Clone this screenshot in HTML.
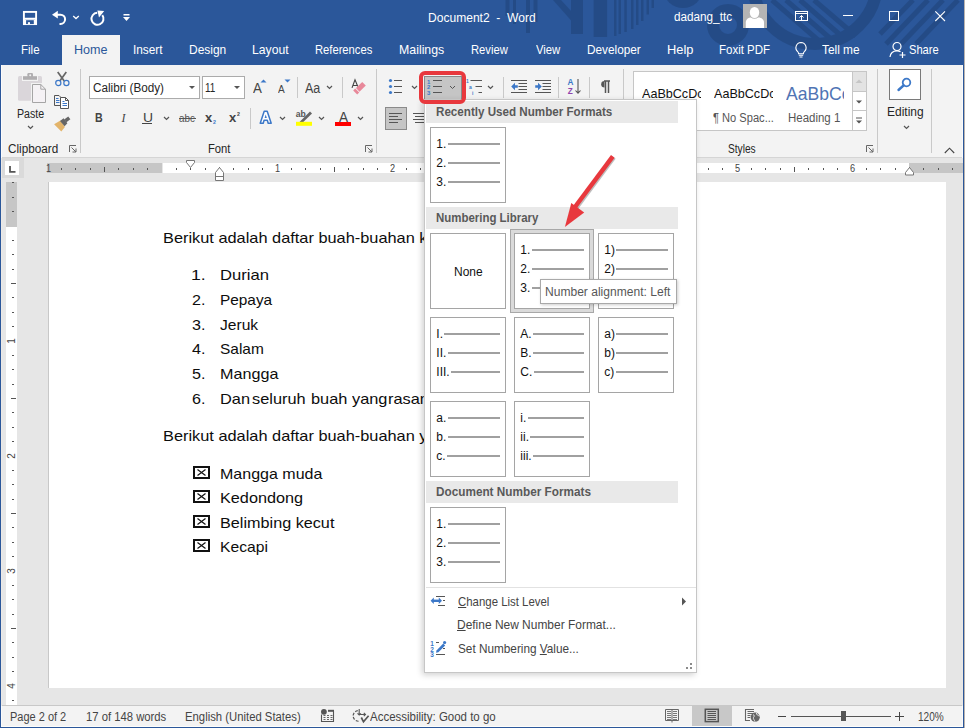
<!DOCTYPE html>
<html><head><meta charset="utf-8"><title>Word</title>
<style>
html,body{margin:0;padding:0;width:965px;height:728px;overflow:hidden;background:#F3F3F3}
body{position:relative;font-family:"Liberation Sans",sans-serif}
.t{position:absolute;white-space:pre;transform-origin:0 0;display:inline-block}
svg{overflow:visible}
</style></head><body>
<div style="position:absolute;left:0px;top:0px;width:965px;height:65px;background:#2B579A"></div>
<svg style="position:absolute;left:0px;top:0px;" width="965" height="65" viewBox="0 0 965 65"><defs><clipPath id="tb"><rect x="0" y="0" width="965" height="52"/></clipPath></defs>
<g clip-path="url(#tb)" fill="#0A1E3C" opacity="0.2">
<rect x="505.5" y="0" width="4" height="16"/><rect x="513" y="0" width="3" height="24"/>
<rect x="526" y="0" width="4" height="33"/><rect x="533.5" y="0" width="4" height="22"/>
<polygon points="553,0 561,0 583,24 583,34"/><rect x="571" y="0" width="12" height="34"/>
<rect x="593.6" y="0" width="13.5" height="37"/>
<rect x="614" y="0" width="2.5" height="36"/><rect x="618.5" y="0" width="2.5" height="34"/><rect x="624.3" y="0" width="2.5" height="32"/>
<rect x="631" y="0" width="2.5" height="29"/><rect x="636" y="0" width="2.5" height="25"/><rect x="641" y="0" width="2.5" height="21"/>
<rect x="646.5" y="0" width="2.5" height="14.5"/><rect x="651.5" y="0" width="2.5" height="8"/>
<circle cx="683" cy="-12" r="20"/>
</g>
<g clip-path="url(#tb)" fill="none" stroke="#0A1E3C" opacity="0.2">
<circle cx="728" cy="25" r="15" stroke-width="12"/>
<circle cx="815" cy="-18" r="62" stroke-width="12"/>
<path d="M772 0 L818 40 M786 0 L832 40 M800 0 L846 40 M814 0 L856 36" stroke-width="5"/>
<path d="M958 0 L916 44 M943 0 L901 44 M928 0 L886 44 M913 0 L880 34" stroke-width="5"/>
</g></svg>
<div style="position:absolute;left:62px;top:35px;width:58px;height:30px;background:#F3F3F3"></div>
<div style="position:absolute;left:0px;top:65px;width:965px;height:92px;background:#F3F3F3"></div>
<div style="position:absolute;left:0px;top:157px;width:965px;height:1px;background:#D5D5D5"></div>
<div style="position:absolute;left:0px;top:158px;width:965px;height:547px;background:#E6E6E6"></div>
<div style="position:absolute;left:0px;top:705px;width:965px;height:1px;background:#C8C8C8"></div>
<div style="position:absolute;left:0px;top:706px;width:965px;height:22px;background:#F3F3F3"></div>
<div style="position:absolute;left:1px;top:65px;width:1px;height:93px;background:#FBFBFB"></div>
<div style="position:absolute;left:962px;top:65px;width:1px;height:93px;background:#FBFBFB"></div>
<div style="position:absolute;left:1px;top:158px;width:1px;height:548px;background:#ECE9E6"></div>
<div style="position:absolute;left:962px;top:158px;width:1px;height:548px;background:#ECE9E6"></div>
<div style="position:absolute;left:1px;top:706px;width:1px;height:21px;background:#FBFBFB"></div>
<div style="position:absolute;left:962px;top:706px;width:1px;height:21px;background:#FBFBFB"></div>
<div style="position:absolute;left:1px;top:726px;width:962px;height:1px;background:#FDFDFB"></div>
<div style="position:absolute;left:0px;top:0px;width:1px;height:728px;background:#2B579A"></div>
<div style="position:absolute;left:963px;top:0px;width:1px;height:728px;background:#2B579A"></div>
<div style="position:absolute;left:964px;top:0px;width:1px;height:728px;background:#B9B3AE"></div>
<div style="position:absolute;left:0px;top:727px;width:964px;height:1px;background:#2B579A"></div>
<svg style="position:absolute;left:22px;top:10px;" width="16" height="16" viewBox="0 0 16 16"><rect x="1.9" y="1.9" width="12.2" height="12.2" fill="none" stroke="#fff" stroke-width="1.9"/><path d="M2 8.7 H14" stroke="#fff" stroke-width="1.9"/><path d="M2 9.5 H14 V14.5 H2 Z" fill="#fff"/><rect x="4.1" y="10.2" width="7.7" height="3.9" fill="#2B579A"/><rect x="5.9" y="12.2" width="2.1" height="2" fill="#fff"/></svg>
<svg style="position:absolute;left:50px;top:9px;" width="18" height="17" viewBox="0 0 18 17"><path d="M2 5.7 L7.8 1.8 V9.6 Z" fill="#fff"/><path d="M6 5.7 H10.5 A4.6 4.6 0 0 1 10.5 14.9 H9.5" fill="none" stroke="#fff" stroke-width="2"/></svg>
<svg style="position:absolute;left:72px;top:15px;" width="8" height="5" viewBox="0 0 8 5"><path d="M1.2 1 L4 3.6 L6.8 1" fill="none" stroke="#fff" stroke-width="1.3"/></svg>
<svg style="position:absolute;left:90px;top:10px;" width="16" height="16" viewBox="0 0 16 16"><path d="M12.3 5.2 A6 6 0 1 1 7.2 2.8" fill="none" stroke="#fff" stroke-width="2"/><path d="M7.4 0.6 L14.2 1 L9 7.4 Z" fill="#fff"/></svg>
<svg style="position:absolute;left:122px;top:13px;" width="9" height="9" viewBox="0 0 9 9"><rect x="1.5" y="1" width="6" height="1.5" fill="#fff"/><path d="M1 4 H8 L4.5 8 Z" fill="#fff"/></svg>
<span class="t" id="t50826fd906" style="left:427.50px;top:11.64px;font-size:12px;line-height:12px;color:#FFFFFF;font-weight:400;font-family:'Liberation Sans',sans-serif;transform:scaleX(1.0049);">Document2&nbsp;&nbsp;-&nbsp;&nbsp;Word</span>
<span class="t" id="t759e692181" style="left:673.70px;top:10.84px;font-size:12px;line-height:12px;color:#FFFFFF;font-weight:400;font-family:'Liberation Sans',sans-serif;transform:scaleX(0.9767);">dadang_ttc</span>
<div style="position:absolute;left:743px;top:4px;width:24px;height:24px;background:#B4B4B4"></div>
<svg style="position:absolute;left:743px;top:4px;" width="24" height="24" viewBox="0 0 24 24"><path d="M2.8 24 V18.5 C2.8 15.5 5 13.4 8 13.4 H15.5 C18.5 13.4 21 15.5 21 18.5 V24 Z" fill="#fff"/><ellipse cx="11.5" cy="8.5" rx="5.5" ry="6.3" fill="#B4B4B4"/><ellipse cx="11.5" cy="8.5" rx="4.7" ry="5.5" fill="#fff"/></svg>
<svg style="position:absolute;left:795px;top:11px;" width="14" height="11" viewBox="0 0 14 11"><rect x="0.5" y="0.5" width="12" height="9" fill="none" stroke="#fff" stroke-width="1"/><path d="M0.5 2.5 H12.5" stroke="#fff" stroke-width="1"/><path d="M6.5 9 V4.5 M4.5 6.5 L6.5 4.5 L8.5 6.5" fill="none" stroke="#fff" stroke-width="1"/></svg>
<div style="position:absolute;left:843px;top:15px;width:10px;height:1px;background:#fff"></div>
<svg style="position:absolute;left:889px;top:11px;" width="11" height="11" viewBox="0 0 11 11"><rect x="0.5" y="0.5" width="9" height="9" fill="none" stroke="#fff" stroke-width="1"/></svg>
<svg style="position:absolute;left:935px;top:11px;" width="11" height="11" viewBox="0 0 11 11"><path d="M0.3 0.3 L10 10 M10 0.3 L0.3 10" stroke="#fff" stroke-width="1.1"/></svg>
<span class="t" id="t38dda35d39" style="left:20.61px;top:43.09px;font-size:13px;line-height:13px;color:#FFFFFF;font-weight:400;font-family:'Liberation Sans',sans-serif;transform:scaleX(0.8875);">File</span>
<span class="t" id="t00ed5b1c03" style="left:73.53px;top:43.09px;font-size:13px;line-height:13px;color:#2B579A;font-weight:400;font-family:'Liberation Sans',sans-serif;transform:scaleX(0.9657);">Home</span>
<span class="t" id="t0c2e46f12b" style="left:132.89px;top:43.09px;font-size:13px;line-height:13px;color:#FFFFFF;font-weight:400;font-family:'Liberation Sans',sans-serif;transform:scaleX(0.9091);">Insert</span>
<span class="t" id="tb33252f86d" style="left:188.78px;top:43.09px;font-size:13px;line-height:13px;color:#FFFFFF;font-weight:400;font-family:'Liberation Sans',sans-serif;transform:scaleX(0.9201);">Design</span>
<span class="t" id="t018b2ecd3f" style="left:251.76px;top:43.09px;font-size:13px;line-height:13px;color:#FFFFFF;font-weight:400;font-family:'Liberation Sans',sans-serif;transform:scaleX(0.9396);">Layout</span>
<span class="t" id="taaff4938c7" style="left:315.34px;top:43.09px;font-size:13px;line-height:13px;color:#FFFFFF;font-weight:400;font-family:'Liberation Sans',sans-serif;transform:scaleX(0.8609);">References</span>
<span class="t" id="t418e57d4e2" style="left:398.95px;top:43.09px;font-size:13px;line-height:13px;color:#FFFFFF;font-weight:400;font-family:'Liberation Sans',sans-serif;transform:scaleX(0.9495);">Mailings</span>
<span class="t" id="t5a5f72c3c6" style="left:471.44px;top:43.09px;font-size:13px;line-height:13px;color:#FFFFFF;font-weight:400;font-family:'Liberation Sans',sans-serif;transform:scaleX(0.8642);">Review</span>
<span class="t" id="t5b546ff0f5" style="left:536.20px;top:43.09px;font-size:13px;line-height:13px;color:#FFFFFF;font-weight:400;font-family:'Liberation Sans',sans-serif;transform:scaleX(0.8685);">View</span>
<span class="t" id="t26e85c247d" style="left:587.09px;top:43.09px;font-size:13px;line-height:13px;color:#FFFFFF;font-weight:400;font-family:'Liberation Sans',sans-serif;transform:scaleX(0.9079);">Developer</span>
<span class="t" id="tcad589be5b" style="left:666.71px;top:43.09px;font-size:13px;line-height:13px;color:#FFFFFF;font-weight:400;font-family:'Liberation Sans',sans-serif;transform:scaleX(0.9880);">Help</span>
<span class="t" id="ta532031cd1" style="left:718.82px;top:43.09px;font-size:13px;line-height:13px;color:#FFFFFF;font-weight:400;font-family:'Liberation Sans',sans-serif;transform:scaleX(0.8849);">Foxit PDF</span>
<span class="t" id="t941b6eb1b3" style="left:822.00px;top:43.09px;font-size:13px;line-height:13px;color:#FFFFFF;font-weight:400;font-family:'Liberation Sans',sans-serif;transform:scaleX(0.9134);">Tell me</span>
<span class="t" id="t9260fbb219" style="left:909.20px;top:43.09px;font-size:13px;line-height:13px;color:#FFFFFF;font-weight:400;font-family:'Liberation Sans',sans-serif;transform:scaleX(0.8561);">Share</span>
<svg style="position:absolute;left:793px;top:41px;" width="16" height="17" viewBox="0 0 16 17"><path d="M8 1.5 A5.2 5.2 0 0 1 11.3 10.6 C10.5 11.3 10.4 12 10.4 12.8 H5.6 C5.6 12 5.5 11.3 4.7 10.6 A5.2 5.2 0 0 1 8 1.5 Z" fill="none" stroke="#fff" stroke-width="1.1"/><path d="M5.8 14.3 H10.2 M6.5 16 H9.5" stroke="#fff" stroke-width="1.1"/></svg>
<svg style="position:absolute;left:889px;top:41px;" width="18" height="17" viewBox="0 0 18 17"><circle cx="8" cy="5.5" r="4" fill="none" stroke="#fff" stroke-width="1.2"/><path d="M1 16 C1.5 11.5 4.5 9.8 8 9.8 C9.5 9.8 10.5 10.1 11.5 10.6" fill="none" stroke="#fff" stroke-width="1.2"/><path d="M13.5 11 V17 M10.5 14 H16.5" stroke="#fff" stroke-width="1.2"/></svg>
<svg style="position:absolute;left:17px;top:72px;" width="31" height="32" viewBox="0 0 31 32"><rect x="1" y="4" width="24" height="24.7" rx="1.5" fill="#DAD6DA"/>
<rect x="5" y="3" width="16" height="6" fill="#F3F3F3"/>
<rect x="6" y="4.2" width="14" height="3.6" fill="#B0AEB0"/>
<rect x="10.4" y="1" width="5.6" height="4.5" rx="1.2" fill="#B0AEB0"/><circle cx="13.2" cy="3.2" r="1" fill="#F3F3F3"/>
<rect x="14" y="11" width="16" height="21" fill="#F3F3F3"/>
<path d="M15.5 12.5 H23.8 L28.5 17.2 V30.5 H15.5 Z" fill="#F5F2F5" stroke="#A5A5A5" stroke-width="1"/>
<path d="M23.8 12.5 V17.2 H28.5" fill="none" stroke="#A5A5A5" stroke-width="1"/></svg>
<span class="t" id="tea2cef91c9" style="left:16.50px;top:107.54px;font-size:12px;line-height:12px;color:#262626;font-weight:400;font-family:'Liberation Sans',sans-serif;transform:scaleX(0.8868);">Paste</span>
<svg style="position:absolute;left:27px;top:125px;" width="7" height="5" viewBox="0 0 7 5"><path d="M1 1 L3.5 3.5 L6 1" fill="none" stroke="#555" stroke-width="1.2"/></svg>
<svg style="position:absolute;left:54px;top:71px;" width="16" height="16" viewBox="0 0 16 16"><path d="M3.7 1 L10.2 10 M12.3 1 L5.8 10" stroke="#666" stroke-width="1.7"/>
<circle cx="4.3" cy="12" r="2.6" fill="none" stroke="#3C78C8" stroke-width="1.2"/>
<circle cx="12.4" cy="12" r="2.6" fill="none" stroke="#3C78C8" stroke-width="1.2"/></svg>
<svg style="position:absolute;left:53px;top:94px;" width="18" height="16" viewBox="0 0 18 16"><path d="M1.5 1.5 H6 L8 3.5 V11.5 H1.5 Z" fill="#F3F3F3" stroke="#555" stroke-width="1"/>
<path d="M3 4.5 H5.5 M3 6.5 H6.5 M3 8.5 H6.5" stroke="#3C78C8" stroke-width="1"/>
<path d="M7.5 3.5 H12.5 L15.5 6.5 V14.5 H7.5 Z" fill="#fff" stroke="#555" stroke-width="1"/>
<path d="M12.5 3.5 V6.5 H15.5" fill="none" stroke="#555" stroke-width="1"/>
<path d="M9.5 7.5 H11.5 M9.5 9.5 H14 M9.5 11.5 H14" stroke="#3C78C8" stroke-width="1"/></svg>
<svg style="position:absolute;left:53px;top:116px;" width="18" height="17" viewBox="0 0 18 17"><path d="M1.1 8.2 L7.4 4.5 L11.9 10.9 L8.3 15.4 Z" fill="#E3B46A"/>
<path d="M7 5 L10.6 2.2 L14.4 7.2 L11.6 10.2 Z" fill="#666"/>
<path d="M11.2 3.4 L15.2 0.4 L17.4 3.2 L13.4 6.2 Z" fill="#666"/></svg>
<span class="t" id="t2fc24af427" style="left:7.50px;top:142.54px;font-size:12px;line-height:12px;color:#262626;font-weight:400;font-family:'Liberation Sans',sans-serif;transform:scaleX(0.9765);">Clipboard</span>
<svg style="position:absolute;left:69px;top:145px;" width="8" height="8" viewBox="0 0 8 8"><path d="M0.5 7 V0.5 H7" fill="none" stroke="#666" stroke-width="1"/><path d="M2.5 2.5 L7 7 M7 3.5 V7 H3.5" fill="none" stroke="#666" stroke-width="1"/></svg>
<div style="position:absolute;left:80px;top:69px;width:1px;height:84px;background:#C9C9C9"></div>
<div style="position:absolute;left:89px;top:76px;width:111px;height:23px;background:#fff;box-sizing:border-box;border:1px solid #ABABAB"></div>
<span class="t" id="t584eb017ee" style="left:92.70px;top:81.84px;font-size:12px;line-height:12px;color:#262626;font-weight:400;font-family:'Liberation Sans',sans-serif;transform:scaleX(0.9768);">Calibri (Body)</span>
<svg style="position:absolute;left:189px;top:86px;" width="7" height="4" viewBox="0 0 7 4"><path d="M0 0 H6 L3 3 Z" fill="#555"/></svg>
<div style="position:absolute;left:202px;top:76px;width:43px;height:23px;background:#fff;box-sizing:border-box;border:1px solid #ABABAB"></div>
<span class="t" id="t1cb0075a1e" style="left:205.40px;top:81.84px;font-size:12px;line-height:12px;color:#262626;font-weight:400;font-family:'Liberation Sans',sans-serif;transform:scaleX(0.8292);">11</span>
<svg style="position:absolute;left:234px;top:86px;" width="7" height="4" viewBox="0 0 7 4"><path d="M0 0 H6 L3 3 Z" fill="#555"/></svg>
<span class="t" id="t64e3f73cb9" style="left:253.00px;top:81.15px;font-size:14px;line-height:14px;color:#444;font-weight:400;font-family:'Liberation Sans',sans-serif;transform:scaleX(0.9500);">A</span>
<svg style="position:absolute;left:260px;top:79px;" width="7" height="4" viewBox="0 0 7 4"><path d="M0.5 3.5 L3.5 0.5 L6.5 3.5 Z" fill="#3C78C8"/></svg>
<span class="t" id="t7a5741da58" style="left:278.20px;top:83.69px;font-size:11px;line-height:11px;color:#444;font-weight:400;font-family:'Liberation Sans',sans-serif;transform:scaleX(0.9125);">A</span>
<svg style="position:absolute;left:284px;top:79px;" width="7" height="4" viewBox="0 0 7 4"><path d="M0.5 0.5 H6.5 L3.5 3.5 Z" fill="#3C78C8"/></svg>
<div style="position:absolute;left:297px;top:77px;width:1px;height:21px;background:#C9C9C9"></div>
<span class="t" id="t8c8012e9cd" style="left:305.00px;top:81.15px;font-size:14px;line-height:14px;color:#444;font-weight:400;font-family:'Liberation Sans',sans-serif;transform:scaleX(0.8940);">Aa</span>
<svg style="position:absolute;left:326px;top:85px;" width="7" height="5" viewBox="0 0 7 5"><path d="M1 1 L3.5 3.5 L6 1" fill="none" stroke="#555" stroke-width="1.2"/></svg>
<div style="position:absolute;left:342px;top:77px;width:1px;height:21px;background:#C9C9C9"></div>
<svg style="position:absolute;left:350px;top:78px;" width="18" height="18" viewBox="0 0 18 18"><path d="M2 9.9 L5 1.8 L7.8 8.5 M3 7.5 H7.5" fill="none" stroke="#444" stroke-width="1.1"/>
<path d="M12.2 3.9 L15.8 7.6 L9.5 13.8 L6 9.9 Z" fill="#E8889A"/>
<path d="M5.2 10.6 L9.2 14.6 L7.2 16.6 L3.2 12.6 Z" fill="#E8889A"/></svg>
<span class="t" id="t2efdc3fe56" style="left:95.30px;top:111.84px;font-size:12px;line-height:12px;color:#444;font-weight:700;font-family:'Liberation Sans',sans-serif;transform:scaleX(0.8889);">B</span>
<span class="t" id="t5e222f8c1f" style="left:121.50px;top:111.84px;font-size:12px;line-height:12px;color:#444;font-weight:400;font-family:'Liberation Serif',sans-serif;transform:scaleX(1.0000);font-style:italic">I</span>
<span class="t" id="t7e43fd0d65" style="left:142.50px;top:111.84px;font-size:12px;line-height:12px;color:#444;font-weight:400;font-family:'Liberation Sans',sans-serif;transform:scaleX(1.1625);">U</span>
<div style="position:absolute;left:142px;top:123px;width:10px;height:1px;background:#444"></div>
<svg style="position:absolute;left:163px;top:116px;" width="7" height="5" viewBox="0 0 7 5"><path d="M1 1 L3.5 3.5 L6 1" fill="none" stroke="#555" stroke-width="1.2"/></svg>
<span class="t" id="tc72ef3fb8f" style="left:179.00px;top:112.69px;font-size:11px;line-height:11px;color:#555;font-weight:400;font-family:'Liberation Sans',sans-serif;transform:scaleX(0.8939);">abc</span>
<div style="position:absolute;left:179px;top:118px;width:17px;height:1px;background:#555"></div>
<span class="t" id="t84927785d7" style="left:205.00px;top:110.99px;font-size:13px;line-height:13px;color:#444;font-weight:700;font-family:'Liberation Sans',sans-serif;transform:scaleX(1.0000);">x</span>
<span class="t" id="tee1b1b6b18" style="left:213.00px;top:118.92px;font-size:6px;line-height:6px;color:#3C78C8;font-weight:700;font-family:'Liberation Sans',sans-serif;transform:scaleX(0.8750);">2</span>
<span class="t" id="t7a4e1dc115" style="left:229.00px;top:110.99px;font-size:13px;line-height:13px;color:#444;font-weight:700;font-family:'Liberation Sans',sans-serif;transform:scaleX(1.0000);">x</span>
<span class="t" id="td243369668" style="left:237.00px;top:110.92px;font-size:6px;line-height:6px;color:#444;font-weight:700;font-family:'Liberation Sans',sans-serif;transform:scaleX(0.8750);">2</span>
<div style="position:absolute;left:250px;top:108px;width:1px;height:21px;background:#C9C9C9"></div>
<svg style="position:absolute;left:259px;top:110px;" width="14" height="15" viewBox="0 0 14 15"><path d="M1.2 13.2 L5.2 1.2 H8.2 L12.2 13.2 H9.2 L8.3 10.3 H5.1 L4.2 13.2 Z" fill="#fff" stroke="#3C78C8" stroke-width="1.5" stroke-linejoin="round"/><path d="M5.6 8 H7.8 L6.7 4.6 Z" fill="#3C78C8"/></svg>
<svg style="position:absolute;left:279px;top:116px;" width="7" height="5" viewBox="0 0 7 5"><path d="M1 1 L3.5 3.5 L6 1" fill="none" stroke="#555" stroke-width="1.2"/></svg>
<svg style="position:absolute;left:295px;top:109px;" width="18" height="18" viewBox="0 0 18 18"><text x="0.8" y="7.8" font-family="Liberation Sans" font-weight="700" font-size="8.6" fill="#555">ab</text>
<path d="M5 12.5 L15 2.6 L17 4.6 L7 14.3 L4.6 12.9 Z" fill="#666"/>
<rect x="1" y="12.8" width="16" height="4" fill="#FFFF00"/></svg>
<svg style="position:absolute;left:318px;top:116px;" width="7" height="5" viewBox="0 0 7 5"><path d="M1 1 L3.5 3.5 L6 1" fill="none" stroke="#555" stroke-width="1.2"/></svg>
<span class="t" id="t3f7b0a36ef" style="left:338.50px;top:110.15px;font-size:14px;line-height:14px;color:#444;font-weight:400;font-family:'Liberation Sans',sans-serif;transform:scaleX(0.9700);">A</span>
<div style="position:absolute;left:335px;top:122px;width:16px;height:4px;background:#FF0000"></div>
<svg style="position:absolute;left:357px;top:116px;" width="7" height="5" viewBox="0 0 7 5"><path d="M1 1 L3.5 3.5 L6 1" fill="none" stroke="#555" stroke-width="1.2"/></svg>
<span class="t" id="t2558f57348" style="left:208.40px;top:142.54px;font-size:12px;line-height:12px;color:#262626;font-weight:400;font-family:'Liberation Sans',sans-serif;transform:scaleX(0.9361);">Font</span>
<svg style="position:absolute;left:365px;top:145px;" width="8" height="8" viewBox="0 0 8 8"><path d="M0.5 7 V0.5 H7" fill="none" stroke="#666" stroke-width="1"/><path d="M2.5 2.5 L7 7 M7 3.5 V7 H3.5" fill="none" stroke="#666" stroke-width="1"/></svg>
<div style="position:absolute;left:376px;top:69px;width:1px;height:84px;background:#C9C9C9"></div>
<svg style="position:absolute;left:388px;top:78px;" width="16" height="17" viewBox="0 0 16 17"><circle cx="2.5" cy="2.5" r="1.6" fill="#3C78C8"/><circle cx="2.5" cy="8.5" r="1.6" fill="#3C78C8"/><circle cx="2.5" cy="14.5" r="1.6" fill="#3C78C8"/>
<path d="M6 2.5 H14 M6 8.5 H14 M6 14.5 H14" stroke="#555" stroke-width="1.1"/></svg>
<svg style="position:absolute;left:411px;top:85px;" width="7" height="5" viewBox="0 0 7 5"><path d="M1 1 L3.5 3.5 L6 1" fill="none" stroke="#555" stroke-width="1.2"/></svg>
<div style="position:absolute;left:423.5px;top:75.5px;width:38px;height:24px;background:#C5C5C5;box-sizing:border-box;border:1px solid #8A8A8A"></div>
<svg style="position:absolute;left:427px;top:78px;" width="16" height="17" viewBox="0 0 16 17"><text x="0" y="5.5" font-family="Liberation Sans" font-size="6" font-weight="700" fill="#3C78C8">1</text>
<text x="0" y="11" font-family="Liberation Sans" font-size="6" font-weight="700" fill="#3C78C8">2</text>
<text x="0" y="16.5" font-family="Liberation Sans" font-size="6" font-weight="700" fill="#3C78C8">3</text>
<path d="M6 2.5 H15 M6 8.5 H15 M6 14.5 H15" stroke="#555" stroke-width="1.1"/></svg>
<svg style="position:absolute;left:449px;top:85px;" width="7" height="5" viewBox="0 0 7 5"><path d="M1 1 L3.5 3.5 L6 1" fill="none" stroke="#555" stroke-width="1"/></svg>
<svg style="position:absolute;left:466px;top:78px;" width="17" height="17" viewBox="0 0 17 17"><text x="0" y="5" font-family="Liberation Sans" font-size="5" font-weight="700" fill="#3C78C8">1</text>
<text x="3" y="11" font-family="Liberation Sans" font-size="5" font-weight="700" fill="#3C78C8">a</text>
<text x="6" y="16.5" font-family="Liberation Sans" font-size="5" font-weight="700" fill="#3C78C8">i</text>
<path d="M4.5 2.5 H16 M9.5 8.5 H16 M12.5 14.5 H16" stroke="#555" stroke-width="1.1"/></svg>
<svg style="position:absolute;left:487px;top:85px;" width="7" height="5" viewBox="0 0 7 5"><path d="M1 1 L3.5 3.5 L6 1" fill="none" stroke="#555" stroke-width="1.2"/></svg>
<div style="position:absolute;left:503px;top:77px;width:1px;height:21px;background:#C9C9C9"></div>
<svg style="position:absolute;left:510px;top:79px;" width="18" height="15" viewBox="0 0 18 15"><path d="M1 1.5 H17 M8.5 4.5 H17 M8.5 7.5 H17 M8.5 10.5 H17 M1 13.5 H17" stroke="#555" stroke-width="1"/>
<path d="M1.2 7.5 L5 3.8 V6.2 H7.8 V8.8 H5 V11.2 Z" fill="#3C78C8"/></svg>
<svg style="position:absolute;left:534px;top:79px;" width="18" height="15" viewBox="0 0 18 15"><path d="M1 1.5 H17 M8.5 4.5 H17 M8.5 7.5 H17 M8.5 10.5 H17 M1 13.5 H17" stroke="#555" stroke-width="1"/>
<path d="M7.8 7.5 L4 3.8 V6.2 H1.2 V8.8 H4 V11.2 Z" fill="#3C78C8"/></svg>
<div style="position:absolute;left:558px;top:77px;width:1px;height:21px;background:#C9C9C9"></div>
<svg style="position:absolute;left:566px;top:78px;" width="17" height="17" viewBox="0 0 17 17"><text x="1.5" y="7.4" font-family="Liberation Sans" font-weight="700" font-size="8.2" fill="#3C78C8">A</text>
<text x="1.8" y="15.8" font-family="Liberation Sans" font-weight="700" font-size="8.2" fill="#8E44AD">Z</text>
<path d="M12 1 V15 M9.5 12.5 L12 15.2 L14.5 12.5" fill="none" stroke="#555" stroke-width="1.1"/></svg>
<div style="position:absolute;left:589px;top:77px;width:1px;height:21px;background:#C9C9C9"></div>
<svg style="position:absolute;left:599px;top:80px;" width="12" height="14" viewBox="0 0 12 14"><path d="M5 1 H11 M6.5 1 V13 M9.5 1 V13" stroke="#555" stroke-width="1.5"/><path d="M5.5 1 A3.3 3.3 0 0 0 5.5 7.6 Z" fill="#555"/></svg>
<div style="position:absolute;left:385px;top:107px;width:22px;height:23px;background:#C5C5C5;box-sizing:border-box;border:1px solid #8A8A8A"></div>
<svg style="position:absolute;left:389px;top:112px;" width="14" height="12" viewBox="0 0 14 12"><path d="M0 1.5 H13 M0 4.5 H9 M0 7.5 H13 M0 10.5 H9" stroke="#555" stroke-width="1"/></svg>
<svg style="position:absolute;left:413px;top:112px;" width="14" height="12" viewBox="0 0 14 12"><path d="M0 1.5 H13 M2 4.5 H11 M0 7.5 H13 M2 10.5 H11" stroke="#555" stroke-width="1"/></svg>
<div style="position:absolute;left:623px;top:69px;width:1px;height:84px;background:#C9C9C9"></div>
<div style="position:absolute;left:633px;top:71px;width:234px;height:60px;background:#fff;box-sizing:border-box;border:1px solid #C6C6C6"></div>
<div style="position:absolute;left:634px;top:72px;width:66.5px;height:58px;overflow:hidden">
<span class="t" id="tac2b73fb33" style="left:7.50px;top:14.89px;font-size:13px;line-height:13px;color:#111;font-weight:400;font-family:'Liberation Sans',sans-serif;transform:scaleX(0.9676);">AaBbCcDc</span>
</div>
<div style="position:absolute;left:706px;top:72px;width:66.5px;height:58px;overflow:hidden">
<span class="t" id="t581fdebb4c" style="left:7.70px;top:14.89px;font-size:13px;line-height:13px;color:#111;font-weight:400;font-family:'Liberation Sans',sans-serif;transform:scaleX(0.9676);">AaBbCcDc</span>
</div>
<div style="position:absolute;left:778px;top:72px;width:66px;height:58px;overflow:hidden">
<span class="t" id="t09a1b52659" style="left:7.50px;top:11.91px;font-size:19px;line-height:19px;color:#5074B4;font-weight:400;font-family:'Liberation Sans',sans-serif;transform:scaleX(0.9248);">AaBbCc</span>
</div>
<span class="t" id="te6e7c74e66" style="left:713.00px;top:111.84px;font-size:12px;line-height:12px;color:#555;font-weight:400;font-family:'Liberation Sans',sans-serif;transform:scaleX(0.9256);">&para; No Spac...</span>
<span class="t" id="tba58f42db0" style="left:788.40px;top:111.84px;font-size:12px;line-height:12px;color:#555;font-weight:400;font-family:'Liberation Sans',sans-serif;transform:scaleX(0.9558);">Heading 1</span>
<div style="position:absolute;left:852px;top:72px;width:14px;height:20px;background:#E3E3E3"></div>
<div style="position:absolute;left:852px;top:91px;width:14px;height:1px;background:#C6C6C6"></div>
<div style="position:absolute;left:852px;top:110px;width:14px;height:1px;background:#C6C6C6"></div>
<div style="position:absolute;left:852px;top:72px;width:1px;height:58px;background:#C6C6C6"></div>
<svg style="position:absolute;left:855px;top:79px;" width="8" height="5" viewBox="0 0 8 5"><path d="M0.5 4 L4 0.5 L7.5 4 Z" fill="#C6C6C6"/></svg>
<svg style="position:absolute;left:855px;top:100px;" width="8" height="5" viewBox="0 0 8 5"><path d="M1 0.5 H7 L4 3.5 Z" fill="#555"/></svg>
<svg style="position:absolute;left:855px;top:117px;" width="8" height="8" viewBox="0 0 8 8"><path d="M1 1 H7" stroke="#555" stroke-width="1"/><path d="M1 3.5 H7 L4 6.5 Z" fill="#555"/></svg>
<span class="t" id="tfd26790319" style="left:728.30px;top:142.54px;font-size:12px;line-height:12px;color:#262626;font-weight:400;font-family:'Liberation Sans',sans-serif;transform:scaleX(0.8477);">Styles</span>
<svg style="position:absolute;left:866px;top:145px;" width="8" height="8" viewBox="0 0 8 8"><path d="M0.5 7 V0.5 H7" fill="none" stroke="#666" stroke-width="1"/><path d="M2.5 2.5 L7 7 M7 3.5 V7 H3.5" fill="none" stroke="#666" stroke-width="1"/></svg>
<div style="position:absolute;left:877px;top:69px;width:1px;height:84px;background:#C9C9C9"></div>
<div style="position:absolute;left:889px;top:69px;width:32px;height:31px;background:#fff;box-sizing:border-box;border:1px solid #7A7A7A"></div>
<svg style="position:absolute;left:896px;top:77px;" width="16" height="14" viewBox="0 0 16 14"><circle cx="10.5" cy="5.5" r="3.8" fill="none" stroke="#3C78C8" stroke-width="1.8"/><path d="M7.5 8.5 L2.5 13" stroke="#3C78C8" stroke-width="2.4" stroke-linecap="round"/></svg>
<span class="t" id="t9cab50a9df" style="left:886.50px;top:105.84px;font-size:12px;line-height:12px;color:#262626;font-weight:400;font-family:'Liberation Sans',sans-serif;transform:scaleX(0.9995);">Editing</span>
<svg style="position:absolute;left:903px;top:125px;" width="7" height="5" viewBox="0 0 7 5"><path d="M1 1 L3.5 3.5 L6 1" fill="none" stroke="#555" stroke-width="1.2"/></svg>
<div style="position:absolute;left:931px;top:69px;width:1px;height:84px;background:#C9C9C9"></div>
<svg style="position:absolute;left:944px;top:147px;" width="12" height="7" viewBox="0 0 12 7"><path d="M0.8 6 L5.5 1.2 L10.2 6" fill="none" stroke="#444" stroke-width="1.1"/></svg>
<div style="position:absolute;left:2px;top:158px;width:22px;height:20px;background:#DADADA"></div>
<div style="position:absolute;left:5px;top:161px;width:14px;height:14px;background:#fff"></div>
<svg style="position:absolute;left:9px;top:166px;" width="8" height="8" viewBox="0 0 8 8"><path d="M1 0 V5.8 H6.5" fill="none" stroke="#555" stroke-width="1.8"/></svg>
<div style="position:absolute;left:47px;top:163px;width:115px;height:10px;background:#C6C6C6"></div>
<div style="position:absolute;left:163px;top:163px;width:746px;height:10px;background:#fff"></div>
<div style="position:absolute;left:909px;top:163px;width:54px;height:10px;background:#C6C6C6"></div>
<div style="position:absolute;left:61px;top:168px;width:1px;height:2px;background:#555"></div>
<div style="position:absolute;left:75px;top:168px;width:1px;height:2px;background:#555"></div>
<div style="position:absolute;left:90px;top:168px;width:1px;height:2px;background:#555"></div>
<div style="position:absolute;left:104px;top:167px;width:1px;height:5px;background:#555"></div>
<div style="position:absolute;left:118px;top:168px;width:1px;height:2px;background:#555"></div>
<div style="position:absolute;left:133px;top:168px;width:1px;height:2px;background:#555"></div>
<div style="position:absolute;left:147px;top:168px;width:1px;height:2px;background:#555"></div>
<div style="position:absolute;left:176px;top:168px;width:1px;height:2px;background:#555"></div>
<div style="position:absolute;left:190px;top:168px;width:1px;height:2px;background:#555"></div>
<div style="position:absolute;left:205px;top:168px;width:1px;height:2px;background:#555"></div>
<div style="position:absolute;left:219px;top:167px;width:1px;height:5px;background:#555"></div>
<div style="position:absolute;left:233px;top:168px;width:1px;height:2px;background:#555"></div>
<div style="position:absolute;left:248px;top:168px;width:1px;height:2px;background:#555"></div>
<div style="position:absolute;left:262px;top:168px;width:1px;height:2px;background:#555"></div>
<div style="position:absolute;left:291px;top:168px;width:1px;height:2px;background:#555"></div>
<div style="position:absolute;left:305px;top:168px;width:1px;height:2px;background:#555"></div>
<div style="position:absolute;left:320px;top:168px;width:1px;height:2px;background:#555"></div>
<div style="position:absolute;left:334px;top:167px;width:1px;height:5px;background:#555"></div>
<div style="position:absolute;left:348px;top:168px;width:1px;height:2px;background:#555"></div>
<div style="position:absolute;left:363px;top:168px;width:1px;height:2px;background:#555"></div>
<div style="position:absolute;left:377px;top:168px;width:1px;height:2px;background:#555"></div>
<div style="position:absolute;left:406px;top:168px;width:1px;height:2px;background:#555"></div>
<div style="position:absolute;left:420px;top:168px;width:1px;height:2px;background:#555"></div>
<div style="position:absolute;left:435px;top:168px;width:1px;height:2px;background:#555"></div>
<div style="position:absolute;left:449px;top:167px;width:1px;height:5px;background:#555"></div>
<div style="position:absolute;left:463px;top:168px;width:1px;height:2px;background:#555"></div>
<div style="position:absolute;left:478px;top:168px;width:1px;height:2px;background:#555"></div>
<div style="position:absolute;left:492px;top:168px;width:1px;height:2px;background:#555"></div>
<div style="position:absolute;left:521px;top:168px;width:1px;height:2px;background:#555"></div>
<div style="position:absolute;left:535px;top:168px;width:1px;height:2px;background:#555"></div>
<div style="position:absolute;left:550px;top:168px;width:1px;height:2px;background:#555"></div>
<div style="position:absolute;left:564px;top:167px;width:1px;height:5px;background:#555"></div>
<div style="position:absolute;left:578px;top:168px;width:1px;height:2px;background:#555"></div>
<div style="position:absolute;left:593px;top:168px;width:1px;height:2px;background:#555"></div>
<div style="position:absolute;left:607px;top:168px;width:1px;height:2px;background:#555"></div>
<div style="position:absolute;left:636px;top:168px;width:1px;height:2px;background:#555"></div>
<div style="position:absolute;left:650px;top:168px;width:1px;height:2px;background:#555"></div>
<div style="position:absolute;left:665px;top:168px;width:1px;height:2px;background:#555"></div>
<div style="position:absolute;left:679px;top:167px;width:1px;height:5px;background:#555"></div>
<div style="position:absolute;left:693px;top:168px;width:1px;height:2px;background:#555"></div>
<div style="position:absolute;left:708px;top:168px;width:1px;height:2px;background:#555"></div>
<div style="position:absolute;left:722px;top:168px;width:1px;height:2px;background:#555"></div>
<div style="position:absolute;left:751px;top:168px;width:1px;height:2px;background:#555"></div>
<div style="position:absolute;left:765px;top:168px;width:1px;height:2px;background:#555"></div>
<div style="position:absolute;left:780px;top:168px;width:1px;height:2px;background:#555"></div>
<div style="position:absolute;left:794px;top:167px;width:1px;height:5px;background:#555"></div>
<div style="position:absolute;left:808px;top:168px;width:1px;height:2px;background:#555"></div>
<div style="position:absolute;left:823px;top:168px;width:1px;height:2px;background:#555"></div>
<div style="position:absolute;left:837px;top:168px;width:1px;height:2px;background:#555"></div>
<div style="position:absolute;left:866px;top:168px;width:1px;height:2px;background:#555"></div>
<div style="position:absolute;left:880px;top:168px;width:1px;height:2px;background:#555"></div>
<div style="position:absolute;left:895px;top:168px;width:1px;height:2px;background:#555"></div>
<div style="position:absolute;left:909px;top:167px;width:1px;height:5px;background:#555"></div>
<div style="position:absolute;left:923px;top:168px;width:1px;height:2px;background:#555"></div>
<div style="position:absolute;left:938px;top:168px;width:1px;height:2px;background:#555"></div>
<div style="position:absolute;left:952px;top:168px;width:1px;height:2px;background:#555"></div>
<span class="t" id="tdfbb49226c" style="left:274.50px;top:163.53px;font-size:10px;line-height:10px;color:#444;font-weight:400;font-family:'Liberation Sans',sans-serif;transform:scaleX(0.9167);">1</span>
<span class="t" id="t5d111903ab" style="left:389.50px;top:163.53px;font-size:10px;line-height:10px;color:#444;font-weight:400;font-family:'Liberation Sans',sans-serif;transform:scaleX(0.9167);">2</span>
<span class="t" id="teefa966b5c" style="left:504.50px;top:163.53px;font-size:10px;line-height:10px;color:#444;font-weight:400;font-family:'Liberation Sans',sans-serif;transform:scaleX(0.9167);">3</span>
<span class="t" id="t96ace43221" style="left:619.50px;top:163.53px;font-size:10px;line-height:10px;color:#444;font-weight:400;font-family:'Liberation Sans',sans-serif;transform:scaleX(0.9167);">4</span>
<span class="t" id="te2d1fbf875" style="left:734.50px;top:163.53px;font-size:10px;line-height:10px;color:#444;font-weight:400;font-family:'Liberation Sans',sans-serif;transform:scaleX(0.9167);">5</span>
<span class="t" id="t564b40d400" style="left:849.50px;top:163.53px;font-size:10px;line-height:10px;color:#444;font-weight:400;font-family:'Liberation Sans',sans-serif;transform:scaleX(0.9167);">6</span>
<span class="t" id="rl1" style="left:45.50px;top:163.53px;font-size:10px;line-height:10px;color:#444;font-weight:400;font-family:'Liberation Sans',sans-serif;transform:scaleX(0.9167);">1</span>
<svg style="position:absolute;left:185px;top:159px;" width="11" height="11" viewBox="0 0 11 11"><path d="M1.5 1.5 H9.5 V3.5 L5.5 8.5 L1.5 3.5 Z" fill="#fff" stroke="#777" stroke-width="1"/></svg>
<svg style="position:absolute;left:214px;top:166px;" width="11" height="16" viewBox="0 0 11 16"><path d="M1.5 14.5 V6.5 L5.5 1.5 L9.5 6.5 V14.5 Z M1.5 10.5 H9.5" fill="#fff" stroke="#777" stroke-width="1"/></svg>
<svg style="position:absolute;left:904px;top:166px;" width="11" height="10" viewBox="0 0 11 10"><path d="M1.5 9 V6.5 L5.5 1.5 L9.5 6.5 V9 Z" fill="#fff" stroke="#777" stroke-width="1"/></svg>
<div style="position:absolute;left:6px;top:182px;width:11px;height:45px;background:#C6C6C6"></div>
<div style="position:absolute;left:6px;top:227px;width:11px;height:478px;background:#fff"></div>
<div style="position:absolute;left:12px;top:182px;width:2px;height:1px;background:#555"></div>
<div style="position:absolute;left:12px;top:197px;width:2px;height:1px;background:#555"></div>
<div style="position:absolute;left:12px;top:211px;width:2px;height:1px;background:#555"></div>
<div style="position:absolute;left:12px;top:240px;width:2px;height:1px;background:#555"></div>
<div style="position:absolute;left:12px;top:254px;width:2px;height:1px;background:#555"></div>
<div style="position:absolute;left:12px;top:269px;width:2px;height:1px;background:#555"></div>
<div style="position:absolute;left:11px;top:283px;width:5px;height:1px;background:#555"></div>
<div style="position:absolute;left:12px;top:297px;width:2px;height:1px;background:#555"></div>
<div style="position:absolute;left:12px;top:312px;width:2px;height:1px;background:#555"></div>
<div style="position:absolute;left:12px;top:326px;width:2px;height:1px;background:#555"></div>
<div style="position:absolute;left:12px;top:355px;width:2px;height:1px;background:#555"></div>
<div style="position:absolute;left:12px;top:369px;width:2px;height:1px;background:#555"></div>
<div style="position:absolute;left:12px;top:384px;width:2px;height:1px;background:#555"></div>
<div style="position:absolute;left:11px;top:398px;width:5px;height:1px;background:#555"></div>
<div style="position:absolute;left:12px;top:412px;width:2px;height:1px;background:#555"></div>
<div style="position:absolute;left:12px;top:427px;width:2px;height:1px;background:#555"></div>
<div style="position:absolute;left:12px;top:441px;width:2px;height:1px;background:#555"></div>
<div style="position:absolute;left:12px;top:470px;width:2px;height:1px;background:#555"></div>
<div style="position:absolute;left:12px;top:484px;width:2px;height:1px;background:#555"></div>
<div style="position:absolute;left:12px;top:499px;width:2px;height:1px;background:#555"></div>
<div style="position:absolute;left:11px;top:513px;width:5px;height:1px;background:#555"></div>
<div style="position:absolute;left:12px;top:527px;width:2px;height:1px;background:#555"></div>
<div style="position:absolute;left:12px;top:542px;width:2px;height:1px;background:#555"></div>
<div style="position:absolute;left:12px;top:556px;width:2px;height:1px;background:#555"></div>
<div style="position:absolute;left:12px;top:585px;width:2px;height:1px;background:#555"></div>
<div style="position:absolute;left:12px;top:599px;width:2px;height:1px;background:#555"></div>
<div style="position:absolute;left:12px;top:614px;width:2px;height:1px;background:#555"></div>
<div style="position:absolute;left:11px;top:628px;width:5px;height:1px;background:#555"></div>
<div style="position:absolute;left:12px;top:642px;width:2px;height:1px;background:#555"></div>
<div style="position:absolute;left:12px;top:657px;width:2px;height:1px;background:#555"></div>
<div style="position:absolute;left:12px;top:671px;width:2px;height:1px;background:#555"></div>
<div style="position:absolute;left:12px;top:700px;width:2px;height:1px;background:#555"></div>
<span style="position:absolute;left:5px;top:335.6px;width:14px;height:10px;font-size:10px;line-height:10px;text-align:center;color:#444;font-family:'Liberation Sans',sans-serif;transform:rotate(-90deg)">1</span>
<span style="position:absolute;left:5px;top:450.6px;width:14px;height:10px;font-size:10px;line-height:10px;text-align:center;color:#444;font-family:'Liberation Sans',sans-serif;transform:rotate(-90deg)">2</span>
<span style="position:absolute;left:5px;top:565.6px;width:14px;height:10px;font-size:10px;line-height:10px;text-align:center;color:#444;font-family:'Liberation Sans',sans-serif;transform:rotate(-90deg)">3</span>
<span style="position:absolute;left:5px;top:680.6px;width:14px;height:10px;font-size:10px;line-height:10px;text-align:center;color:#444;font-family:'Liberation Sans',sans-serif;transform:rotate(-90deg)">4</span>
<div style="position:absolute;left:48px;top:182px;width:1px;height:506px;background:#C8C8C8"></div>
<div style="position:absolute;left:49px;top:182px;width:897px;height:506px;background:#fff"></div>
<span class="t" id="p1" style="left:163.00px;top:230.30px;font-size:15px;line-height:15px;color:#0D0D0D;font-weight:400;font-family:'Liberation Sans',sans-serif;transform:scaleX(1.0900);">Berikut adalah daftar buah-buahan kesukaan saya:</span>
<span class="t" id="t0b49a2159c" style="left:191.12px;top:267.10px;font-size:15px;line-height:15px;color:#0D0D0D;font-weight:400;font-family:'Liberation Sans',sans-serif;transform:scaleX(1.1796);">1.</span>
<span class="t" id="t3d24875ce4" style="left:220.40px;top:267.10px;font-size:15px;line-height:15px;color:#0D0D0D;font-weight:400;font-family:'Liberation Sans',sans-serif;transform:scaleX(1.1087);">Durian</span>
<span class="t" id="t4b02c90cc5" style="left:192.30px;top:292.00px;font-size:15px;line-height:15px;color:#0D0D0D;font-weight:400;font-family:'Liberation Sans',sans-serif;transform:scaleX(1.0756);">2.</span>
<span class="t" id="t608eb37c60" style="left:220.40px;top:292.00px;font-size:15px;line-height:15px;color:#0D0D0D;font-weight:400;font-family:'Liberation Sans',sans-serif;transform:scaleX(1.0251);">Pepaya</span>
<span class="t" id="tb1a11e9e78" style="left:192.30px;top:316.90px;font-size:15px;line-height:15px;color:#0D0D0D;font-weight:400;font-family:'Liberation Sans',sans-serif;transform:scaleX(1.0756);">3.</span>
<span class="t" id="t5b842e589b" style="left:220.40px;top:316.90px;font-size:15px;line-height:15px;color:#0D0D0D;font-weight:400;font-family:'Liberation Sans',sans-serif;transform:scaleX(1.0409);">Jeruk</span>
<span class="t" id="tf9d453abd6" style="left:192.30px;top:341.10px;font-size:15px;line-height:15px;color:#0D0D0D;font-weight:400;font-family:'Liberation Sans',sans-serif;transform:scaleX(1.0756);">4.</span>
<span class="t" id="t625527a15f" style="left:220.40px;top:341.10px;font-size:15px;line-height:15px;color:#0D0D0D;font-weight:400;font-family:'Liberation Sans',sans-serif;transform:scaleX(1.0304);">Salam</span>
<span class="t" id="t57f038fd9c" style="left:192.30px;top:366.10px;font-size:15px;line-height:15px;color:#0D0D0D;font-weight:400;font-family:'Liberation Sans',sans-serif;transform:scaleX(1.0756);">5.</span>
<span class="t" id="t695c0dcc45" style="left:220.40px;top:366.10px;font-size:15px;line-height:15px;color:#0D0D0D;font-weight:400;font-family:'Liberation Sans',sans-serif;transform:scaleX(1.0768);">Mangga</span>
<span class="t" id="tf4d101e561" style="left:192.30px;top:391.00px;font-size:15px;line-height:15px;color:#0D0D0D;font-weight:400;font-family:'Liberation Sans',sans-serif;transform:scaleX(1.0756);">6.</span>
<span class="t" id="t5cb9616ec3" style="left:220.20px;top:391.00px;font-size:15px;line-height:15px;color:#0D0D0D;font-weight:400;font-family:'Liberation Sans',sans-serif;transform:scaleX(1.0900);">Dan</span>
<span class="t" id="t9184c171f3" style="left:252.40px;top:391.00px;font-size:15px;line-height:15px;color:#0D0D0D;font-weight:400;font-family:'Liberation Sans',sans-serif;transform:scaleX(1.0900);">seluruh</span>
<span class="t" id="t83a3b59a17" style="left:310.70px;top:391.00px;font-size:15px;line-height:15px;color:#0D0D0D;font-weight:400;font-family:'Liberation Sans',sans-serif;transform:scaleX(1.0900);">buah</span>
<span class="t" id="tb72f8c5133" style="left:351.50px;top:391.00px;font-size:15px;line-height:15px;color:#0D0D0D;font-weight:400;font-family:'Liberation Sans',sans-serif;transform:scaleX(1.0900);">yang</span>
<span class="t" id="t77168a5060" style="left:388.40px;top:391.00px;font-size:15px;line-height:15px;color:#0D0D0D;font-weight:400;font-family:'Liberation Sans',sans-serif;transform:scaleX(1.0900);">rasanya</span>
<span class="t" id="p2" style="left:163.00px;top:428.10px;font-size:15px;line-height:15px;color:#0D0D0D;font-weight:400;font-family:'Liberation Sans',sans-serif;transform:scaleX(1.0900);">Berikut adalah daftar buah-buahan yang rasanya asam:</span>
<svg style="position:absolute;left:192px;top:465px;" width="19" height="16" viewBox="0 0 19 16"><rect x="2" y="2" width="15" height="11" fill="none" stroke="#111" stroke-width="2"/><path d="M5.5 4.5 L13.5 10.5 M13.5 4.5 L5.5 10.5" stroke="#111" stroke-width="1.2"/></svg>
<span class="t" id="t18403eddf5" style="left:220.40px;top:466.00px;font-size:15px;line-height:15px;color:#0D0D0D;font-weight:400;font-family:'Liberation Sans',sans-serif;transform:scaleX(1.0675);">Mangga muda</span>
<svg style="position:absolute;left:192px;top:489px;" width="19" height="16" viewBox="0 0 19 16"><rect x="2" y="2" width="15" height="11" fill="none" stroke="#111" stroke-width="2"/><path d="M5.5 4.5 L13.5 10.5 M13.5 4.5 L5.5 10.5" stroke="#111" stroke-width="1.2"/></svg>
<span class="t" id="t9c88e036a3" style="left:220.40px;top:490.10px;font-size:15px;line-height:15px;color:#0D0D0D;font-weight:400;font-family:'Liberation Sans',sans-serif;transform:scaleX(1.0822);">Kedondong</span>
<svg style="position:absolute;left:192px;top:514px;" width="19" height="16" viewBox="0 0 19 16"><rect x="2" y="2" width="15" height="11" fill="none" stroke="#111" stroke-width="2"/><path d="M5.5 4.5 L13.5 10.5 M13.5 4.5 L5.5 10.5" stroke="#111" stroke-width="1.2"/></svg>
<span class="t" id="t49bfb10aa7" style="left:220.40px;top:514.80px;font-size:15px;line-height:15px;color:#0D0D0D;font-weight:400;font-family:'Liberation Sans',sans-serif;transform:scaleX(1.0802);">Belimbing kecut</span>
<svg style="position:absolute;left:192px;top:538px;" width="19" height="16" viewBox="0 0 19 16"><rect x="2" y="2" width="15" height="11" fill="none" stroke="#111" stroke-width="2"/><path d="M5.5 4.5 L13.5 10.5 M13.5 4.5 L5.5 10.5" stroke="#111" stroke-width="1.2"/></svg>
<span class="t" id="td8347e8d22" style="left:220.40px;top:539.30px;font-size:15px;line-height:15px;color:#0D0D0D;font-weight:400;font-family:'Liberation Sans',sans-serif;transform:scaleX(1.0442);">Kecapi</span>
<div style="position:absolute;left:424px;top:99px;width:273px;height:574px;background:#fff;box-sizing:border-box;border:1px solid #C6C6C6;box-shadow:-2px 2px 6px rgba(0,0,0,0.18)"></div>
<div style="position:absolute;left:426px;top:101px;width:252px;height:22px;background:#E9E9E9"></div>
<span class="t" id="td6ce2f3ef9" style="left:435.70px;top:105.64px;font-size:12px;line-height:12px;color:#595959;font-weight:700;font-family:'Liberation Sans',sans-serif;transform:scaleX(0.9683);">Recently Used Number Formats</span>
<div style="position:absolute;left:430px;top:127px;width:76px;height:76px;background:#fff;box-sizing:border-box;border:1px solid #A5A5A5"></div>
<span class="t" id="g430_127_0" style="left:436.30px;top:138.34px;font-size:12px;line-height:12px;color:#111;font-weight:400;font-family:'Liberation Sans',sans-serif;">1.</span>
<div style="position:absolute;left:448px;top:143px;width:52px;height:2px;background:#A0A0A0"></div>
<span class="t" id="g430_127_1" style="left:436.30px;top:157.34px;font-size:12px;line-height:12px;color:#111;font-weight:400;font-family:'Liberation Sans',sans-serif;">2.</span>
<div style="position:absolute;left:448px;top:162px;width:52px;height:2px;background:#A0A0A0"></div>
<span class="t" id="g430_127_2" style="left:436.30px;top:176.34px;font-size:12px;line-height:12px;color:#111;font-weight:400;font-family:'Liberation Sans',sans-serif;">3.</span>
<div style="position:absolute;left:448px;top:181px;width:52px;height:2px;background:#A0A0A0"></div>
<div style="position:absolute;left:426px;top:207px;width:252px;height:22px;background:#E9E9E9"></div>
<span class="t" id="tc80363fb82" style="left:435.60px;top:212.24px;font-size:12px;line-height:12px;color:#595959;font-weight:700;font-family:'Liberation Sans',sans-serif;transform:scaleX(0.9538);">Numbering Library</span>
<div style="position:absolute;left:430px;top:233px;width:76px;height:76px;background:#fff;box-sizing:border-box;border:1px solid #A5A5A5"></div>
<span class="t" id="ta6b9c78f59" style="left:453.50px;top:265.84px;font-size:12px;line-height:12px;color:#111;font-weight:400;font-family:'Liberation Sans',sans-serif;transform:scaleX(0.9995);">None</span>
<div style="position:absolute;left:510px;top:229px;width:84px;height:84px;background:#DADADA;box-sizing:border-box;border:1px solid #A8A8A8"></div>
<div style="position:absolute;left:514px;top:233px;width:76px;height:76px;background:#fff;box-sizing:border-box;border:1px solid #A5A5A5"></div>
<span class="t" id="g514_233_0" style="left:520.30px;top:244.34px;font-size:12px;line-height:12px;color:#111;font-weight:400;font-family:'Liberation Sans',sans-serif;">1.</span>
<div style="position:absolute;left:532px;top:249px;width:52px;height:2px;background:#A0A0A0"></div>
<span class="t" id="g514_233_1" style="left:520.30px;top:263.34px;font-size:12px;line-height:12px;color:#111;font-weight:400;font-family:'Liberation Sans',sans-serif;">2.</span>
<div style="position:absolute;left:532px;top:268px;width:52px;height:2px;background:#A0A0A0"></div>
<span class="t" id="g514_233_2" style="left:520.30px;top:282.34px;font-size:12px;line-height:12px;color:#111;font-weight:400;font-family:'Liberation Sans',sans-serif;">3.</span>
<div style="position:absolute;left:532px;top:287px;width:52px;height:2px;background:#A0A0A0"></div>
<div style="position:absolute;left:598px;top:233px;width:76px;height:76px;background:#fff;box-sizing:border-box;border:1px solid #A5A5A5"></div>
<span class="t" id="g598_233_0" style="left:604.30px;top:244.34px;font-size:12px;line-height:12px;color:#111;font-weight:400;font-family:'Liberation Sans',sans-serif;">1)</span>
<div style="position:absolute;left:616px;top:249px;width:52px;height:2px;background:#A0A0A0"></div>
<span class="t" id="g598_233_1" style="left:604.30px;top:263.34px;font-size:12px;line-height:12px;color:#111;font-weight:400;font-family:'Liberation Sans',sans-serif;">2)</span>
<div style="position:absolute;left:616px;top:268px;width:52px;height:2px;background:#A0A0A0"></div>
<span class="t" id="g598_233_2" style="left:604.30px;top:282.34px;font-size:12px;line-height:12px;color:#111;font-weight:400;font-family:'Liberation Sans',sans-serif;">3)</span>
<div style="position:absolute;left:616px;top:287px;width:52px;height:2px;background:#A0A0A0"></div>
<div style="position:absolute;left:430px;top:317px;width:76px;height:76px;background:#fff;box-sizing:border-box;border:1px solid #A5A5A5"></div>
<span class="t" id="g430_317_0" style="left:436.30px;top:328.34px;font-size:12px;line-height:12px;color:#111;font-weight:400;font-family:'Liberation Sans',sans-serif;">I.</span>
<div style="position:absolute;left:444px;top:333px;width:56px;height:2px;background:#A0A0A0"></div>
<span class="t" id="g430_317_1" style="left:436.30px;top:347.34px;font-size:12px;line-height:12px;color:#111;font-weight:400;font-family:'Liberation Sans',sans-serif;">II.</span>
<div style="position:absolute;left:448px;top:352px;width:52px;height:2px;background:#A0A0A0"></div>
<span class="t" id="g430_317_2" style="left:436.30px;top:366.34px;font-size:12px;line-height:12px;color:#111;font-weight:400;font-family:'Liberation Sans',sans-serif;">III.</span>
<div style="position:absolute;left:451px;top:371px;width:49px;height:2px;background:#A0A0A0"></div>
<div style="position:absolute;left:514px;top:317px;width:76px;height:76px;background:#fff;box-sizing:border-box;border:1px solid #A5A5A5"></div>
<span class="t" id="g514_317_0" style="left:520.30px;top:328.34px;font-size:12px;line-height:12px;color:#111;font-weight:400;font-family:'Liberation Sans',sans-serif;">A.</span>
<div style="position:absolute;left:533px;top:333px;width:51px;height:2px;background:#A0A0A0"></div>
<span class="t" id="g514_317_1" style="left:520.30px;top:347.34px;font-size:12px;line-height:12px;color:#111;font-weight:400;font-family:'Liberation Sans',sans-serif;">B.</span>
<div style="position:absolute;left:533px;top:352px;width:51px;height:2px;background:#A0A0A0"></div>
<span class="t" id="g514_317_2" style="left:520.30px;top:366.34px;font-size:12px;line-height:12px;color:#111;font-weight:400;font-family:'Liberation Sans',sans-serif;">C.</span>
<div style="position:absolute;left:534px;top:371px;width:50px;height:2px;background:#A0A0A0"></div>
<div style="position:absolute;left:598px;top:317px;width:76px;height:76px;background:#fff;box-sizing:border-box;border:1px solid #A5A5A5"></div>
<span class="t" id="g598_317_0" style="left:604.30px;top:328.34px;font-size:12px;line-height:12px;color:#111;font-weight:400;font-family:'Liberation Sans',sans-serif;">a)</span>
<div style="position:absolute;left:616px;top:333px;width:52px;height:2px;background:#A0A0A0"></div>
<span class="t" id="g598_317_1" style="left:604.30px;top:347.34px;font-size:12px;line-height:12px;color:#111;font-weight:400;font-family:'Liberation Sans',sans-serif;">b)</span>
<div style="position:absolute;left:616px;top:352px;width:52px;height:2px;background:#A0A0A0"></div>
<span class="t" id="g598_317_2" style="left:604.30px;top:366.34px;font-size:12px;line-height:12px;color:#111;font-weight:400;font-family:'Liberation Sans',sans-serif;">c)</span>
<div style="position:absolute;left:616px;top:371px;width:52px;height:2px;background:#A0A0A0"></div>
<div style="position:absolute;left:430px;top:401px;width:76px;height:76px;background:#fff;box-sizing:border-box;border:1px solid #A5A5A5"></div>
<span class="t" id="g430_401_0" style="left:436.30px;top:412.34px;font-size:12px;line-height:12px;color:#111;font-weight:400;font-family:'Liberation Sans',sans-serif;">a.</span>
<div style="position:absolute;left:448px;top:417px;width:52px;height:2px;background:#A0A0A0"></div>
<span class="t" id="g430_401_1" style="left:436.30px;top:431.34px;font-size:12px;line-height:12px;color:#111;font-weight:400;font-family:'Liberation Sans',sans-serif;">b.</span>
<div style="position:absolute;left:448px;top:436px;width:52px;height:2px;background:#A0A0A0"></div>
<span class="t" id="g430_401_2" style="left:436.30px;top:450.34px;font-size:12px;line-height:12px;color:#111;font-weight:400;font-family:'Liberation Sans',sans-serif;">c.</span>
<div style="position:absolute;left:447px;top:455px;width:53px;height:2px;background:#A0A0A0"></div>
<div style="position:absolute;left:514px;top:401px;width:76px;height:76px;background:#fff;box-sizing:border-box;border:1px solid #A5A5A5"></div>
<span class="t" id="g514_401_0" style="left:520.30px;top:412.34px;font-size:12px;line-height:12px;color:#111;font-weight:400;font-family:'Liberation Sans',sans-serif;">i.</span>
<div style="position:absolute;left:528px;top:417px;width:56px;height:2px;background:#A0A0A0"></div>
<span class="t" id="g514_401_1" style="left:520.30px;top:431.34px;font-size:12px;line-height:12px;color:#111;font-weight:400;font-family:'Liberation Sans',sans-serif;">ii.</span>
<div style="position:absolute;left:530px;top:436px;width:54px;height:2px;background:#A0A0A0"></div>
<span class="t" id="g514_401_2" style="left:520.30px;top:450.34px;font-size:12px;line-height:12px;color:#111;font-weight:400;font-family:'Liberation Sans',sans-serif;">iii.</span>
<div style="position:absolute;left:533px;top:455px;width:51px;height:2px;background:#A0A0A0"></div>
<div style="position:absolute;left:426px;top:481px;width:252px;height:22px;background:#E9E9E9"></div>
<span class="t" id="t36a510a80e" style="left:435.70px;top:486.24px;font-size:12px;line-height:12px;color:#595959;font-weight:700;font-family:'Liberation Sans',sans-serif;transform:scaleX(0.9808);">Document Number Formats</span>
<div style="position:absolute;left:430px;top:507px;width:76px;height:76px;background:#fff;box-sizing:border-box;border:1px solid #A5A5A5"></div>
<span class="t" id="g430_507_0" style="left:436.30px;top:518.34px;font-size:12px;line-height:12px;color:#111;font-weight:400;font-family:'Liberation Sans',sans-serif;">1.</span>
<div style="position:absolute;left:448px;top:523px;width:52px;height:2px;background:#A0A0A0"></div>
<span class="t" id="g430_507_1" style="left:436.30px;top:537.34px;font-size:12px;line-height:12px;color:#111;font-weight:400;font-family:'Liberation Sans',sans-serif;">2.</span>
<div style="position:absolute;left:448px;top:542px;width:52px;height:2px;background:#A0A0A0"></div>
<span class="t" id="g430_507_2" style="left:436.30px;top:556.34px;font-size:12px;line-height:12px;color:#111;font-weight:400;font-family:'Liberation Sans',sans-serif;">3.</span>
<div style="position:absolute;left:448px;top:561px;width:52px;height:2px;background:#A0A0A0"></div>
<div style="position:absolute;left:426px;top:587px;width:270px;height:1px;background:#E2E2E2"></div>
<span class="t" id="t9587b75160" style="left:458.20px;top:594.59px;font-size:13px;line-height:13px;color:#444444;font-weight:400;font-family:'Liberation Sans',sans-serif;transform:scaleX(0.8783);"><u>C</u>hange List Level</span>
<span class="t" id="t547002ecdb" style="left:457.28px;top:618.29px;font-size:13px;line-height:13px;color:#444444;font-weight:400;font-family:'Liberation Sans',sans-serif;transform:scaleX(0.9196);"><u>D</u>efine New Number Format...</span>
<span class="t" id="t0a2ed03ebe" style="left:458.20px;top:642.29px;font-size:13px;line-height:13px;color:#444444;font-weight:400;font-family:'Liberation Sans',sans-serif;transform:scaleX(0.9057);">Set Numbering <u>V</u>alue...</span>
<svg style="position:absolute;left:681px;top:597px;" width="6" height="9" viewBox="0 0 6 9"><path d="M1 0.5 L5 4.5 L1 8.5 Z" fill="#555"/></svg>
<svg style="position:absolute;left:430px;top:595px;" width="17" height="12" viewBox="0 0 17 12"><path d="M2.8 5.8 H9.8" stroke="#3C78C8" stroke-width="2.4"/><path d="M0.6 5.8 L3.8 2.6 V9 Z M12 5.8 L8.8 2.6 V9 Z" fill="#3C78C8"/>
<path d="M6 1.5 H15 M13 5.5 H15 M8 10.5 H15" stroke="#555" stroke-width="1"/></svg>
<svg style="position:absolute;left:430px;top:640px;" width="17" height="18" viewBox="0 0 17 18"><text x="0.3" y="6" font-family="Liberation Sans" font-size="6.5" font-weight="700" fill="#3C78C8">1</text>
<text x="0.3" y="11.5" font-family="Liberation Sans" font-size="6.5" font-weight="700" fill="#3C78C8">2</text>
<text x="0.3" y="17" font-family="Liberation Sans" font-size="6.5" font-weight="700" fill="#3C78C8">3</text>
<path d="M6 2.5 H9 M13 8.5 H15 M6 14.5 H15" stroke="#555" stroke-width="1"/>
<path d="M6.5 10.5 L13.2 3.6 L15.2 5.6 L8.4 12.3 L6 12.8 Z" fill="#3C78C8"/><circle cx="14.6" cy="2.5" r="1.6" fill="#3C78C8"/></svg>
<div style="position:absolute;left:690px;top:663px;width:2px;height:2px;background:#8A8A8A"></div>
<div style="position:absolute;left:686px;top:667px;width:2px;height:2px;background:#8A8A8A"></div>
<div style="position:absolute;left:690px;top:667px;width:2px;height:2px;background:#8A8A8A"></div>
<div style="position:absolute;left:540px;top:279px;width:137px;height:25px;background:#fff;box-sizing:border-box;border:1px solid #A9A9A9;box-shadow:1px 1px 3px rgba(0,0,0,0.2)"></div>
<span class="t" id="tb3a090fbe5" style="left:545.30px;top:285.64px;font-size:12px;line-height:12px;color:#575757;font-weight:400;font-family:'Liberation Sans',sans-serif;transform:scaleX(1.0048);">Number alignment: Left</span>
<div style="position:absolute;left:419px;top:71px;width:47px;height:33px;box-sizing:border-box;border:4.5px solid #E8383D;border-radius:6px"></div>
<svg style="position:absolute;left:555px;top:150px;" width="70" height="85" viewBox="0 0 70 85"><g transform="translate(1,1)" opacity="0.25"><path d="M57.8 6.4 L16.5 62" stroke="#000" stroke-width="4.5"/></g>
<path d="M57.8 6.4 L17 61" stroke="#E8383D" stroke-width="4.5" stroke-linecap="butt"/>
<path d="M9.9 77 L16.3 53 L29.2 62.4 Z" fill="#E8383D"/></svg>
<span class="t" id="t2d3c0f7b2f" style="left:9.50px;top:710.64px;font-size:12px;line-height:12px;color:#444444;font-weight:400;font-family:'Liberation Sans',sans-serif;transform:scaleX(0.9156);">Page 2 of 2</span>
<span class="t" id="t07a10fbffd" style="left:85.80px;top:710.64px;font-size:12px;line-height:12px;color:#444444;font-weight:400;font-family:'Liberation Sans',sans-serif;transform:scaleX(0.9392);">17 of 148 words</span>
<span class="t" id="t6e00cb1e4a" style="left:185.30px;top:710.64px;font-size:12px;line-height:12px;color:#444444;font-weight:400;font-family:'Liberation Sans',sans-serif;transform:scaleX(0.9427);">English (United States)</span>
<svg style="position:absolute;left:318px;top:707px;" width="18" height="18" viewBox="0 0 18 18"><circle cx="5.9" cy="4.8" r="2.9" fill="#555"/><rect x="10" y="2.8" width="6" height="2" fill="#555"/>
<path d="M3.5 7.5 V14.5 H15.5 V4" fill="none" stroke="#555" stroke-width="1.1"/>
<path d="M5.5 8.5 H7.5 M9 8.5 H11 M12.5 8.5 H14.5 M5.5 10.5 H7.5 M9 10.5 H11 M12.5 10.5 H14.5 M5.5 12.5 H7.5 M9 12.5 H11 M12.5 12.5 H14.5" stroke="#666" stroke-width="1"/></svg>
<svg style="position:absolute;left:351px;top:707px;" width="20" height="18" viewBox="0 0 20 18"><path d="M6.8 3.6 A5.2 5.2 0 1 0 8.2 14.2" fill="none" stroke="#555" stroke-width="1.2" stroke-dasharray="2.8 1.5"/>
<path d="M8.2 2 V8 M6.5 6.3 L8.2 8 L9.9 6.3 M8.2 7.5 H14.5 M12.8 5.8 L14.5 7.5 L12.8 9.2" fill="none" stroke="#555" stroke-width="1.1"/>
<path d="M10.3 10.5 L12.5 14.8 L17.6 8.8" fill="none" stroke="#555" stroke-width="1.7"/></svg>
<span class="t" id="t02e278b5cb" style="left:370.00px;top:710.64px;font-size:12px;line-height:12px;color:#444444;font-weight:400;font-family:'Liberation Sans',sans-serif;transform:scaleX(0.9566);">Accessibility: Good to go</span>
<svg style="position:absolute;left:664px;top:708px;" width="16" height="16" viewBox="0 0 16 16"><path d="M1.5 1.5 H14.5 V12.5 H1.5 Z M8 1.5 V14.5" fill="none" stroke="#666" stroke-width="1"/>
<path d="M3 3.5 H7 M9 3.5 H13 M3 5.5 H7 M9 5.5 H13 M3 7.5 H7 M9 7.5 H13 M3 9.5 H7 M9 9.5 H13 M3 11.5 H7 M9 11.5 H13" stroke="#777" stroke-width="1"/></svg>
<div style="position:absolute;left:692px;top:706px;width:40px;height:20px;background:#C8C8C8"></div>
<svg style="position:absolute;left:704px;top:708px;" width="16" height="15" viewBox="0 0 16 15"><rect x="1.3" y="1.3" width="13" height="12.3" fill="none" stroke="#555" stroke-width="1.5"/><path d="M3.5 3.5 H12 M3.5 5.5 H12 M3.5 7.5 H12 M3.5 9.5 H12 M3.5 11.5 H12" stroke="#555" stroke-width="1"/></svg>
<svg style="position:absolute;left:744px;top:708px;" width="18" height="16" viewBox="0 0 18 16"><path d="M10 1.5 H1.5 V12.5 H6" fill="none" stroke="#666" stroke-width="1.1"/><path d="M3.5 3.5 H10 M3.5 5.5 H9 M3.5 7.5 H6.5 M3.5 9.5 H6" stroke="#666" stroke-width="1"/>
<circle cx="11.2" cy="9.2" r="4.6" fill="#666"/><path d="M9 6.5 C10.5 7 10.5 8.5 9.5 9.5 C9 11 10.5 12 11 13.5 M12.5 5 C12 6.5 14 7.5 15.5 8" fill="none" stroke="#F3F3F3" stroke-width="0.9"/></svg>
<div style="position:absolute;left:778px;top:716px;width:8px;height:1.2px;background:#444"></div>
<div style="position:absolute;left:791px;top:716px;width:100px;height:1px;background:#555"></div>
<div style="position:absolute;left:841px;top:711px;width:5px;height:10px;background:#555"></div>
<div style="position:absolute;left:895px;top:716px;width:9px;height:1.2px;background:#444"></div>
<div style="position:absolute;left:899px;top:711.5px;width:1.2px;height:9px;background:#444"></div>
<span class="t" id="t84894dfc43" style="left:917.70px;top:710.64px;font-size:12px;line-height:12px;color:#444444;font-weight:400;font-family:'Liberation Sans',sans-serif;transform:scaleX(0.8381);">120%</span>
</body></html>
